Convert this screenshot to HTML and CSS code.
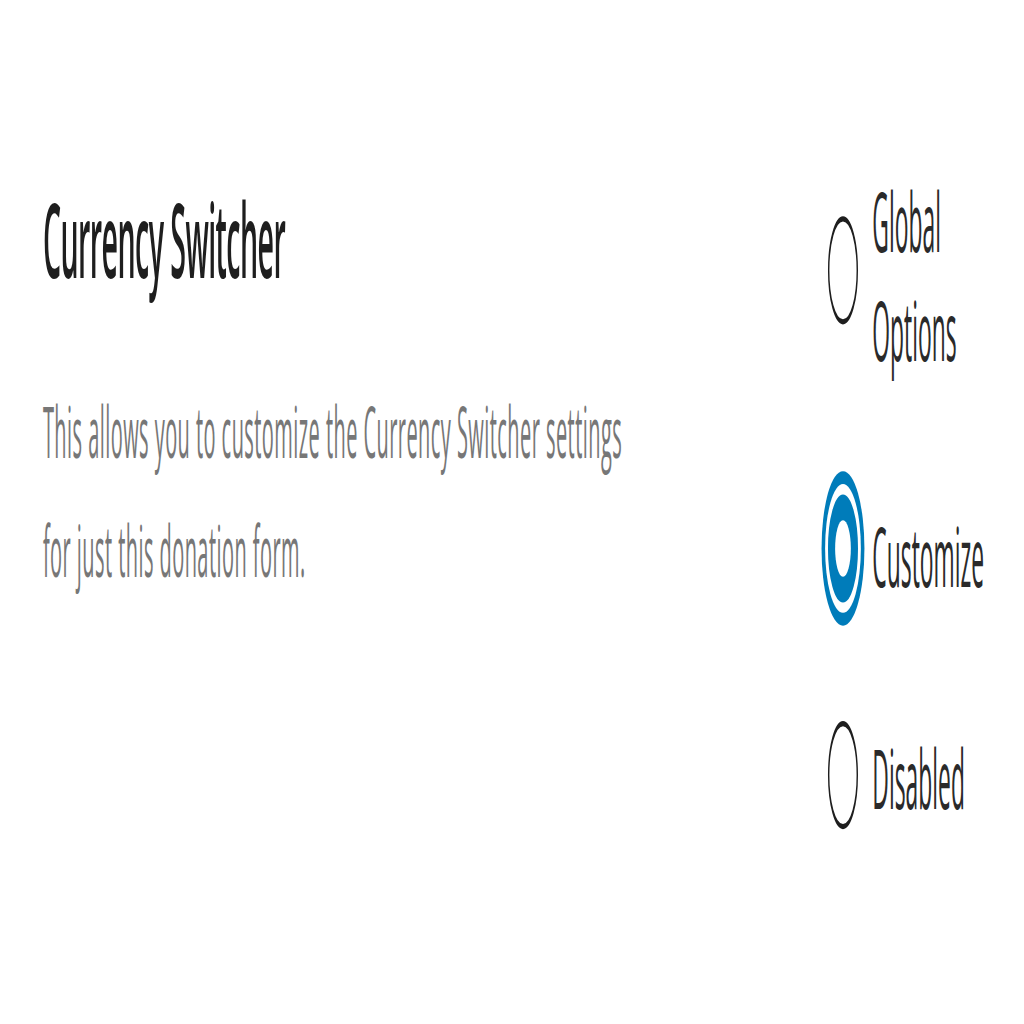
FILE: index.html
```html
<!DOCTYPE html>
<html lang="en">
<head>
<meta charset="utf-8">
<title>Currency Switcher</title>
<link rel="stylesheet" href="styles.css">
</head>
<body>
<div class="stage">
  <div class="intro">
    <h2 class="title">Currency Switcher</h2>
    <p class="desc">This allows you to customize the Currency Switcher settings for just this donation form.</p>
  </div>
  <div class="options">
    <label class="option">
      <input class="radio" type="radio" name="cs">
      <span class="label">Global Options</span>
    </label>
    <label class="option">
      <input class="radio radio-focus" type="radio" name="cs" checked>
      <span class="label">Customize</span>
    </label>
    <label class="option">
      <input class="radio" type="radio" name="cs">
      <span class="label">Disabled</span>
    </label>
  </div>
</div>
</body>
</html>
```
FILE: styles.css
```css
html, body {
  margin: 0;
  background: #ffffff;
  overflow: hidden;
}
body {
  font-family: "Open Sans", "Noto Sans", sans-serif;
  width: 1024px;
  height: 1024px;
}
.stage {
  width: 716px;
  height: 199px;
  transform-origin: 0 0;
  transform: scale(1.43, 5.15);
  display: flex;
  align-items: flex-start;
}
.intro {
  padding: 33px 0 0 30px;
  width: 440px;
  box-sizing: border-box;
}
.title {
  margin: 0;
  font-size: 20px;
  font-weight: 600;
  line-height: 28px;
  letter-spacing: -0.4px;
  color: #1e1e1e;
}
.desc {
  margin: 12.2px 0 0;
  font-size: 14px;
  line-height: 22.4px;
  letter-spacing: 0.3px;
  color: #777777;
}
.options {
  margin-left: auto;
  margin-right: 16px;
  padding-top: 33px;
  width: 121px;
  display: flex;
  flex-direction: column;
  gap: 22px;
}
.option {
  display: flex;
  align-items: center;
  gap: 10px;
}
.radio {
  appearance: none;
  -webkit-appearance: none;
  margin: -3.5px 0 0;
  width: 21px;
  height: 21px;
  flex: none;
  box-sizing: border-box;
  border: 1.5px solid #1e1e1e;
  border-radius: 50%;
  background: #fff;
  display: flex;
  align-items: center;
  justify-content: center;
}
.radio:checked {
  background: #007cba;
  border-color: #007cba;
}
.radio:checked::before {
  content: "";
  width: 11px;
  height: 11px;
  border-radius: 50%;
  background: #fff;
}
.radio-focus {
  box-shadow: 0 0 0 2px #fff, 0 0 0 4.5px #007cba;
}
.label {
  font-size: 16px;
  line-height: 21.4px;
  color: #2a2a2a;
  width: 90px;
}
```
